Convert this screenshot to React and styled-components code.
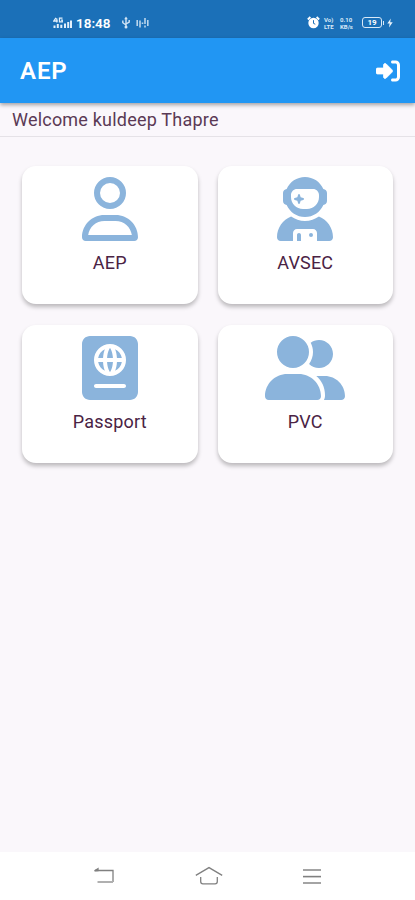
import React from "react"
import styled, { createGlobalStyle } from "styled-components"
import {
  FaRegUser,
  FaUserAstronaut,
  FaPassport,
  FaUserGroup,
} from "react-icons/fa6"

export default () => (
  <Screen>
    <GlobalStyle />

    <StatusBar>
      <StatusGroup>
        <SignalIcon />
        <Clock>18:48</Clock>
        <UsbIcon />
        <VibrateIcon />
      </StatusGroup>
      <StatusGroup>
        <AlarmIcon />
        <TinyStack $width="11px">
          <span>Vo)</span>
          <span>LTE</span>
        </TinyStack>
        <TinyStack $width="15px">
          <span>0.10</span>
          <span>KB/s</span>
        </TinyStack>
        <Battery>19</Battery>
        <BoltIcon />
      </StatusGroup>
    </StatusBar>

    <AppBar>
      <AppTitle>AEP</AppTitle>
      <LogoutButton aria-label="Logout">
        <LogoutIcon />
      </LogoutButton>
    </AppBar>

    <Welcome>Welcome kuldeep Thapre</Welcome>

    <CardGrid>
      <MenuCard icon={<FaRegUser />} width={56} name="AEP" />
      <MenuCard icon={<FaUserAstronaut />} width={56} name="AVSEC" />
      <MenuCard icon={<FaPassport />} width={56} name="Passport" />
      <MenuCard icon={<FaUserGroup />} width={80} name="PVC" />
    </CardGrid>

    <NavBar>
      <NavButton aria-label="Back">
        <svg width="22" height="20" viewBox="0 0 22 20">
          <path d="M2 4.5H20v11.5" />
          <path d="M1.5 4.8L5 2.6v2z" />
          <path d="M4.5 16H20" stroke="#b0b0b0" strokeWidth="2" />
        </svg>
      </NavButton>
      <NavButton aria-label="Home">
        <svg width="28" height="20" viewBox="0 0 28 20">
          <path d="M.8 9.4L14 1.6l13.2 7.8" />
          <path d="M5.7 11v4.6q0 2.2 2.2 2.2h12.2q2.2 0 2.2-2.2V11" />
        </svg>
      </NavButton>
      <NavButton aria-label="Menu">
        <svg width="20" height="20" viewBox="0 0 20 20">
          <path d="M1 4h18M1 17h18" stroke="#a4a4a4" strokeWidth="1.8" />
          <path d="M1 10.6h18" strokeWidth="1.6" />
        </svg>
      </NavButton>
    </NavBar>
  </Screen>
)

const MenuCard = props => {
  const { icon, width, name } = props

  return (
    <Card>
      <CardIcon $width={width}>{icon}</CardIcon>
      <CardName>{name}</CardName>
    </Card>
  )
}

const LogoutIcon = () => (
  <svg width="24" height="24" viewBox="0 0 512 512" fill="currentColor">
    <path
      d="M217.9 105.9L340.7 228.7c7.2 7.2 11.3 17.1 11.3 27.3s-4.1 20.1-11.3 27.3L217.9 406.1c-6.4 6.4-15 9.9-24 9.9c-18.7 0-33.9-15.2-33.9-33.9V320H32c-17.7 0-32-14.3-32-32v-64c0-17.7 14.3-32 32-32h128v-62.1c0-18.7 15.2-33.9 33.9-33.9c9 0 17.6 3.6 24 9.9z"
      stroke="currentColor"
      strokeWidth="16"
    />
    <path d="M352 416h64c17.7 0 32-14.3 32-32V128c0-17.7-14.3-32-32-32h-64c-17.7 0-32-14.3-32-32s14.3-32 32-32h64c53 0 96 43 96 96v256c0 53-43 96-96 96h-64c-17.7 0-32-14.3-32-32s14.3-32 32-32z" />
  </svg>
)

const SignalIcon = () => (
  <svg width="19" height="12" viewBox="0 0 19 12" fill="none" stroke="#e3f0fb">
    <path
      d="M3 .8L.8 4h4M3.8 1.5v4M9.5 1.2H6.5v3.6h2.8V3.2H8"
      strokeWidth="1.3"
    />
    <path
      d="M1.5 11V8.5M4.8 11V7M8.3 11V7.8M12 11V6.5M15.2 11V5M18 11V3.5"
      strokeWidth="2"
    />
  </svg>
)

const UsbIcon = () => (
  <svg width="10" height="13" viewBox="0 0 10 13" fill="none" stroke="#d3e5f5">
    <path d="M5 2v9M1.8 4.5v2.2L5 9M8.2 4v2L5 8" strokeWidth="1.4" />
    <path d="M5 .5l1.8 2.7H3.2z" fill="#d3e5f5" stroke="none" />
    <circle cx="5" cy="11" r="1.5" fill="#d3e5f5" stroke="none" />
  </svg>
)

const VibrateIcon = () => (
  <svg width="13" height="12" viewBox="0 0 13 12" fill="none" stroke="#b9d5ec">
    <path
      d="M1.2 3v6M4 3.5v7M6.5 5.5v1.5M9 1v6M9 8.5v2M11.8 3v6"
      strokeWidth="1.6"
    />
  </svg>
)

const AlarmIcon = () => (
  <svg width="13" height="13" viewBox="0 0 13 13">
    <circle cx="6.5" cy="7" r="5.2" fill="#fff" />
    <path d="M.8 3.5L3.4 1M12.2 3.5L9.6 1" stroke="#fff" strokeWidth="1.8" />
    <path d="M6.5 4.2v3.2l1.8.8" fill="none" stroke="#1c6fb7" />
  </svg>
)

const BoltIcon = () => (
  <svg width="6" height="10" viewBox="0 0 6 10" fill="#e9f3fb">
    <path d="M3.8.5L.3 5.6h2.3L2 9.5l3.7-5.2H3.2z" />
  </svg>
)

const GlobalStyle = createGlobalStyle`
  * {
    box-sizing: border-box;
  }
  body {
    margin: 0;
    font-family: Roboto, "Noto Sans", sans-serif;
    background-color: #faf7fb;
  }
`

const Screen = styled.div`
  display: flex;
  flex-direction: column;
  height: 900px;
  max-height: 100vh;
  overflow: hidden;
  background-color: #faf7fb;
`

const StatusBar = styled.div`
  display: flex;
  flex: none;
  justify-content: space-between;
  align-items: center;
  height: 38px;
  padding: 7px 22px 0 53px;
  background-color: #1b70b8;
  color: #fff;
`

const StatusGroup = styled.div`
  display: flex;
  align-items: center;
  gap: 5px;
  & > svg:first-child {
    margin-right: -1px;
  }
`

const Clock = styled.span`
  width: 36px;
  margin-right: 4px;
  font-size: 13.5px;
  font-weight: 600;
  line-height: 16px;
  white-space: nowrap;
`

const TinyStack = styled.span`
  display: flex;
  flex-direction: column;
  width: ${props => props.$width};
  font-size: 6px;
  font-weight: 700;
  line-height: 7px;
  color: #d9e9f7;
`

const Battery = styled.span`
  position: relative;
  width: 20px;
  height: 11px;
  margin-left: 2px;
  border: 1px solid #d9e9f7;
  border-radius: 3px;
  font-size: 8px;
  font-weight: 700;
  line-height: 9px;
  text-align: center;
  &:after {
    content: "";
    position: absolute;
    top: 3px;
    right: -3px;
    width: 1px;
    height: 4px;
    background-color: #d9e9f7;
  }
`

const AppBar = styled.header`
  display: flex;
  flex: none;
  justify-content: space-between;
  align-items: center;
  height: 65px;
  padding: 1px 15px 0 20px;
  background-color: #2196f3;
  color: #fff;
  box-shadow: 0 2px 4px #00000059;
  z-index: 1;
`

const AppTitle = styled.h1`
  margin: 0;
  font-size: 24px;
  font-weight: 600;
  letter-spacing: 0.9px;
`

const LogoutButton = styled.button`
  display: flex;
  padding: 0;
  border: none;
  background: none;
  color: #fff;
`

const Welcome = styled.p`
  flex: none;
  height: 34px;
  margin: 0;
  padding-left: 12px;
  border-bottom: 1px solid #e5e2e7;
  font-size: 18px;
  line-height: 34px;
  letter-spacing: 0.21px;
  color: #5b3a55;
`

const CardGrid = styled.main`
  display: grid;
  flex: 1;
  grid-template-columns: 1fr 1fr;
  grid-auto-rows: 138px;
  gap: 21px 20px;
  padding: 29px 22px 0;
`

const Card = styled.div`
  display: flex;
  flex-direction: column;
  align-items: center;
  padding-top: 11px;
  border-radius: 14px;
  background-color: #fff;
  box-shadow: 0 3px 4px #00000040;
`

const CardIcon = styled.div`
  display: flex;
  color: #8bb4dc;
  svg {
    width: ${props => props.$width}px;
    height: 64px;
  }
`

const CardName = styled.span`
  margin-top: 11px;
  font-size: 18px;
  line-height: 22px;
  letter-spacing: 0.2px;
  color: #4a2344;
`

const NavBar = styled.nav`
  display: flex;
  flex: none;
  justify-content: space-between;
  height: 48px;
  padding: 14px 93px 0;
  background-color: #fff;
`

const NavButton = styled.button`
  display: flex;
  align-items: flex-start;
  padding: 0;
  border: none;
  background: none;
  svg {
    fill: none;
    stroke: #808080;
    stroke-width: 1.3;
  }
`
